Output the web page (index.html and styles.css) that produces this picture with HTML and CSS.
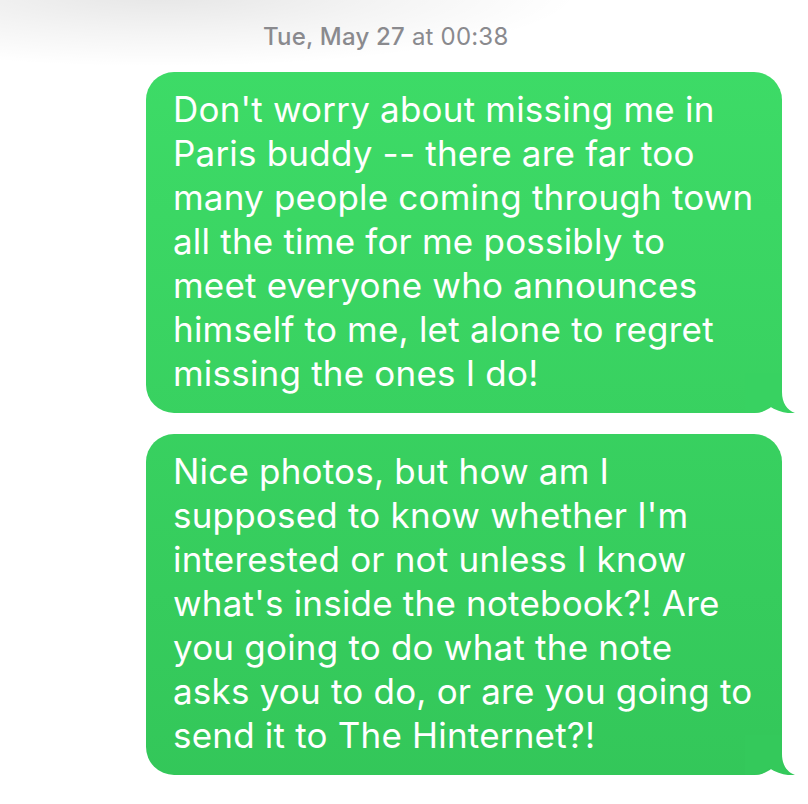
FILE: index.html
```html
<!DOCTYPE html>
<html lang="en">
<head>
<meta charset="utf-8">
<title>Messages</title>
<link rel="stylesheet" href="styles.css">
</head>
<body>
<main class="thread">
  <div class="stamp"><span class="stamp-day">Tue, May 27</span> at 00:38</div>
  <div class="bubble">
    <p class="bubble-text">Don't worry about missing me in<br>Paris buddy -- there are far too<br>many people coming through town<br>all the time for me possibly to<br>meet everyone who announces<br>himself to me, let alone to regret<br>missing the ones I do!</p>
    <svg class="tail" viewBox="0 0 50 40" width="50" height="40" aria-hidden="true"><path d="M0 0 H37 V19 C37 30 42 37 50 40 C44 41 33 39 24 33 C19 37 13 40 5 40 H0 Z"/></svg>
  </div>
  <div class="bubble bubble-2">
    <p class="bubble-text">Nice photos, but how am I<br>supposed to know whether I'm<br>interested or not unless I know<br>what's inside the notebook?! Are<br>you going to do what the note<br>asks you to do, or are you going to<br>send it to The Hinternet?!</p>
    <svg class="tail" viewBox="0 0 50 40" width="50" height="40" aria-hidden="true"><path d="M0 0 H37 V19 C37 30 42 37 50 40 C44 41 33 39 24 33 C19 37 13 40 5 40 H0 Z"/></svg>
  </div>
</main>
</body>
</html>
```
FILE: styles.css
```css
html, body {
  margin: 0;
  padding: 0;
}
body {
  width: 808px;
  height: 804px;
  overflow: hidden;
  background:
    radial-gradient(ellipse 420px 75px at 160px -8px, rgba(0,0,0,0.10), rgba(0,0,0,0.045) 55%, rgba(0,0,0,0) 100%),
    #ffffff;
  font-family: Inter, "Noto Sans", sans-serif;
}
.thread {
  display: flex;
  flex-direction: column;
  align-items: flex-end;
  padding: 23px 26px 0 146px;
}
.stamp {
  align-self: flex-start;
  margin-left: 117px;
  font-size: 24px;
  line-height: 28px;
  letter-spacing: 0.2px;
  color: #8a8a8e;
  font-weight: 400;
  margin-bottom: 21px;
}
.stamp-day {
  font-weight: 500;
}
.bubble {
  position: relative;
  width: 636px;
  box-sizing: border-box;
  padding: 15px 10px 18px 27px;
  border-radius: 28px;
  background: linear-gradient(#3edd68, #33c659) fixed;
  color: #ffffff;
}
.bubble-2 {
  margin-top: 21px;
}
.bubble-text {
  margin: 0;
  font-size: 35px;
  line-height: 44px;
  letter-spacing: 0.2px;
  white-space: nowrap;
}
.tail {
  position: absolute;
  right: -13px;
  bottom: 0;
  display: block;
}
.bubble .tail path {
  fill: #38d261;
}
.bubble-2 .tail path {
  fill: #34c95b;
}
```
